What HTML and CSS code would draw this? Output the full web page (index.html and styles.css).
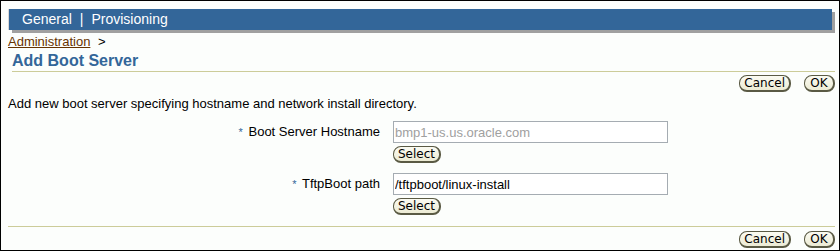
FILE: index.html
```html
<!DOCTYPE html>
<html lang="en">
<head>
    <meta charset="UTF-8">
    <title>Add Boot Server</title>
    <link rel="stylesheet" href="styles.css">
</head>
<body>
<div class="page">
    <div class="tab-bar">
        <span class="tab">General</span>
        <span class="tab-sep">|</span>
        <span class="tab">Provisioning</span>
    </div>

    <div class="breadcrumb">
        <a href="#">Administration</a> <span class="crumb-sep">&gt;</span>
    </div>

    <h1 class="page-title">Add Boot Server</h1>

    <div class="button-row">
        <button class="btn">Cancel</button>
        <button class="btn">OK</button>
    </div>

    <p class="intro">Add new boot server specifying hostname and network install directory.</p>

    <div class="form">
        <div class="form-row">
            <label class="form-label" for="hostname"><span class="req">*</span> Boot Server Hostname</label>
            <div class="form-field">
                <input type="text" id="hostname" class="text-input" placeholder="bmp1-us.us.oracle.com">
                <button class="btn">Select</button>
            </div>
        </div>
        <div class="form-row">
            <label class="form-label" for="tftpboot"><span class="req">*</span> TftpBoot path</label>
            <div class="form-field">
                <input type="text" id="tftpboot" class="text-input" value="/tftpboot/linux-install">
                <button class="btn">Select</button>
            </div>
        </div>
    </div>

    <div class="button-row bottom">
        <button class="btn">Cancel</button>
        <button class="btn">OK</button>
    </div>
</div>
</body>
</html>
```

FILE: styles.css
```css
* {
    margin: 0;
    padding: 0;
    box-sizing: border-box;
}

body {
    width: 840px;
    height: 251px;
    border: 1px solid #000;
    background: #fcfefc;
    font-family: "Liberation Sans", Arial, sans-serif;
    font-size: 13px;
    color: #000;
    overflow: hidden;
}

.page {
    padding: 8px 4px 0 7px;
}

/* top tab bar */
.tab-bar {
    height: 21px;
    margin: 0 3px 0 1px;
    background: #336699;
    box-shadow: -1px 0 0 #d8d8d8, 3px 3px 0 #a0a0a0;
    color: #fff;
    font-size: 14px;
    line-height: 21px;
    padding-left: 13px;
    display: flex;
    gap: 8px;
}

.breadcrumb {
    margin-top: 4px;
    line-height: 15px;
}

.breadcrumb a {
    color: #663300;
    text-decoration: underline;
}

.crumb-sep {
    margin-left: 4px;
}

.page-title {
    margin: 3px 0 0 4px;
    padding-bottom: 1px;
    font-size: 16px;
    line-height: 18px;
    font-weight: bold;
    color: #336699;
    border-bottom: 1px solid #cccc99;
}

.button-row {
    display: flex;
    justify-content: flex-end;
    gap: 13px;
    padding-top: 3px;
}

.button-row.bottom {
    margin-top: 11px;
    border-top: 1px solid #cccc99;
    padding-top: 4px;
}

.btn {
    font-family: "DejaVu Sans", Verdana, sans-serif;
    font-size: 12px;
    line-height: 13px;
    color: #000;
    background: linear-gradient(#fbfbf2, #ecebd4);
    border: 1px solid #5a5a44;
    border-right-width: 2px;
    border-bottom-width: 2px;
    border-radius: 8px;
    padding: 1px 4px;
    height: 17px;
    min-width: 31px;
}

.intro {
    margin-top: 4px;
    line-height: 15px;
}

.form {
    margin-top: 10px;
    display: flex;
    flex-direction: column;
    gap: 10px;
}

.form-row {
    display: grid;
    grid-template-columns: 373px 275px;
    column-gap: 12px;
    align-items: start;
}

.form-label {
    text-align: right;
    font-size: 13px;
    line-height: 22px;
    padding-right: 1px;
}

.req {
    color: #336699;
    font-size: 11px;
    margin-right: 2px;
}

.form-field {
    display: flex;
    flex-direction: column;
    align-items: flex-start;
    gap: 3px;
}

.text-input {
    width: 275px;
    height: 22px;
    border: 1px solid #a5acb2;
    background: #fff;
    font-family: "Liberation Sans", Arial, sans-serif;
    font-size: 13px;
    padding: 0 1px;
    color: #000;
    outline: none;
}

.text-input::placeholder {
    color: #a0a0a0;
}
```
